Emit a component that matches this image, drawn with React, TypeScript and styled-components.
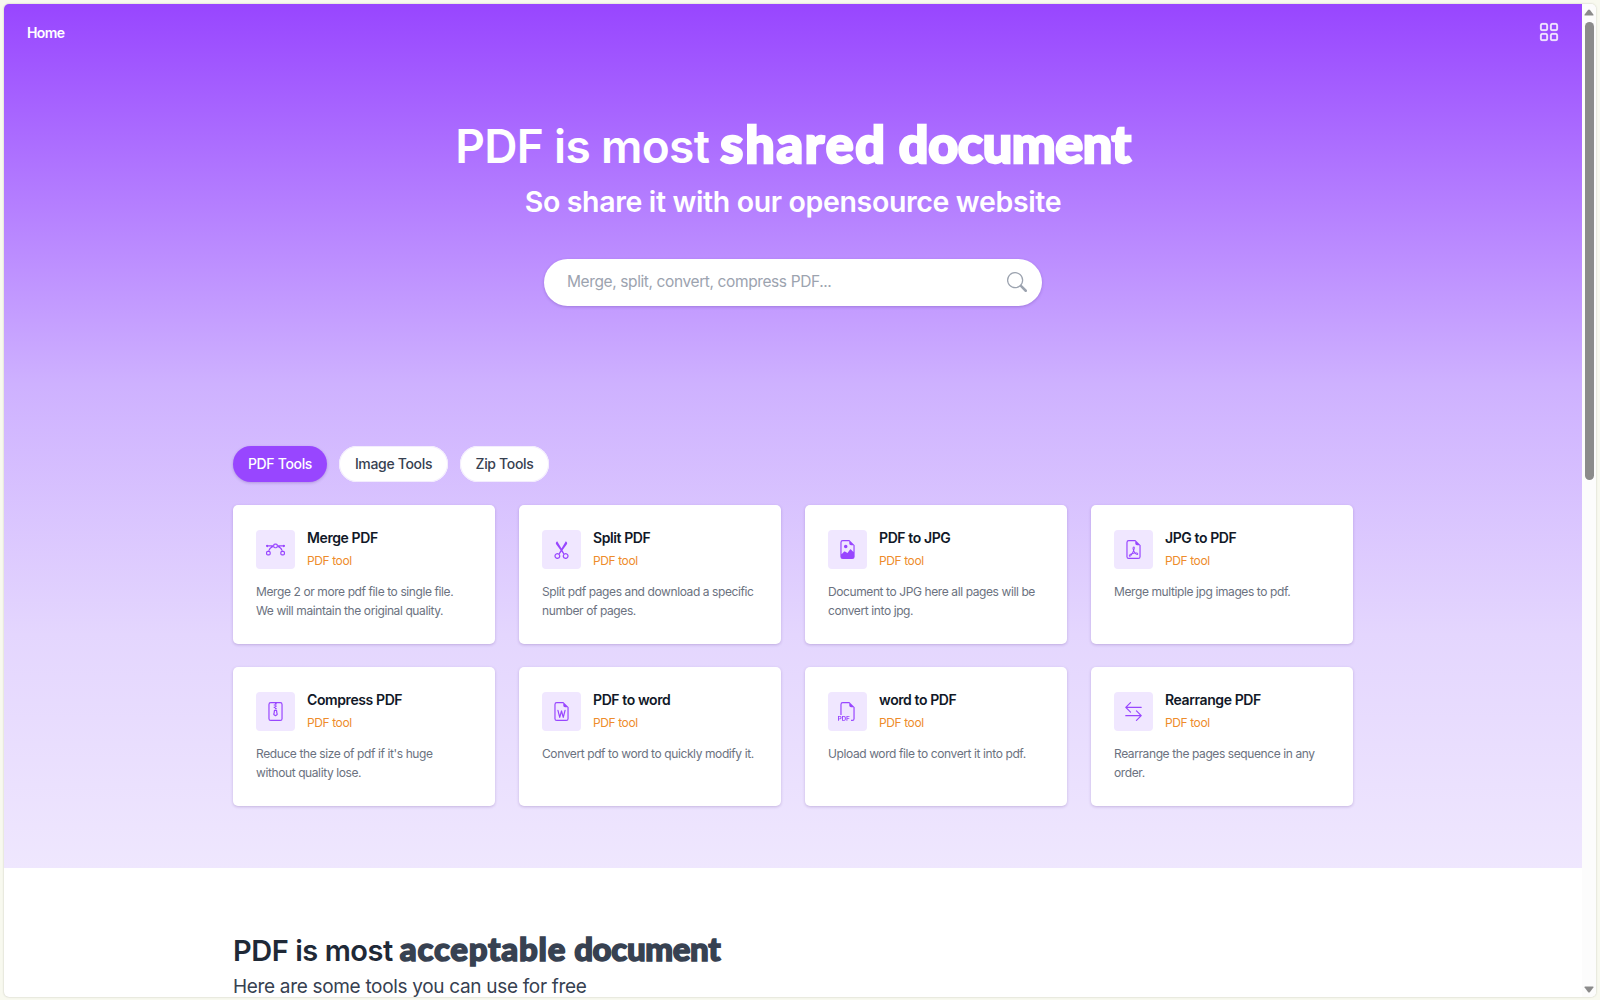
import React from "react";
import styled, { createGlobalStyle } from "styled-components";
import type { IconType } from "react-icons";
import {
  BsGrid, BsSearch, BsBezier, BsScissors, BsFileEarmarkImage, BsFileEarmarkPdf,
  BsFileZip, BsFileEarmarkWord, BsFiletypePdf, BsArrowLeftRight,
} from "react-icons/bs";

const Global = createGlobalStyle`
  *, *::before, *::after { box-sizing: border-box; }
  html, body { margin: 0; height: 100%; }
  body { background: #f8f9ef; overflow: hidden; font-family: Inter, "Liberation Sans", sans-serif; }
  h1, h2, h3, p { margin: 0; font-weight: inherit; }
  button { font: inherit; border: 0; cursor: pointer; }
`;

const Frame = styled.div`
  height: 1000px;
  padding: 4px 4px 3px;
`;

const Window = styled.div`
  display: flex;
  height: 993px;
  overflow: hidden;
  border-radius: 5px;
  background: #fff;
  box-shadow: 0 0 2px rgba(90, 90, 70, 0.35);
`;

const Page = styled.main`
  width: 1578px;
  overflow: hidden;
`;

const Hero = styled.section`
  height: 864px;
  background: linear-gradient(180deg, #9846ff 0%, #ceb1ff 44%, #e4d6fe 73%, #efe7fe 100%);
`;

const Nav = styled.nav`
  display: flex;
  justify-content: space-between;
  align-items: center;
  height: 56px;
  padding: 0 23px;
  color: #fff;
`;

const NavLink = styled.a`
  font-size: 14px;
  font-weight: 600;
  letter-spacing: -0.6px;
`;

const GridIcon = styled(BsGrid)`
  stroke: currentColor;
  stroke-width: 0.3px;
`;

const Headline = styled.header`
  display: flex;
  flex-direction: column;
  align-items: center;
  padding-top: 54px;
  color: #fff;
`;

const Title = styled.h1`
  display: flex;
  align-items: baseline;
  height: 58px;
  line-height: 58px;
  font-size: 46px;
  font-weight: 600;
  letter-spacing: -0.65px;
  white-space: nowrap;
`;

const Display = styled.span<{ $size: number; $spacing: number; $gap: number; $stroke: number; $color: string }>`
  margin-left: ${(p) => p.$gap}px;
  font-family: Lato, Inter, sans-serif;
  font-size: ${(p) => p.$size}px;
  font-weight: 900;
  letter-spacing: ${(p) => p.$spacing}px;
  color: ${(p) => p.$color};
  -webkit-text-stroke: ${(p) => p.$stroke}px ${(p) => p.$color};
`;

const Subtitle = styled.p`
  margin-top: 12px;
  line-height: 36px;
  font-size: 28.5px;
  font-weight: 600;
  letter-spacing: -0.36px;
`;

const Search = styled.div`
  display: flex;
  align-items: center;
  justify-content: space-between;
  width: 498px;
  height: 47px;
  margin-top: 39px;
  padding: 0 15px 2px 23px;
  border-radius: 24px;
  background: #fff;
  color: #9ca3af;
  font-size: 15.5px;
  letter-spacing: -0.39px;
  box-shadow: 0 1px 3px rgba(60, 20, 120, 0.25);
`;

const Container = styled.div`
  width: 1120px;
  margin: 0 auto;
`;

const Tabs = styled.div`
  display: flex;
  gap: 12px;
  margin: 140px 0 23px;
`;

const Tab = styled.button<{ $active?: boolean; $width: number }>`
  width: ${(p) => p.$width}px;
  height: 36px;
  padding: 0 0 2px;
  border-radius: 18px;
  font-size: 14px;
  font-weight: 500;
  letter-spacing: -0.33px;
  color: ${(p) => (p.$active ? "#fff" : "#374151")};
  background: ${(p) => (p.$active ? "#9846ff" : "#fff")};
  box-shadow: ${(p) => (p.$active ? "0 1px 3px rgba(60,20,120,.25)" : "inset 0 0 0 1px #f3edfd")};
`;

const Grid = styled.div`
  display: grid;
  grid-template-columns: repeat(4, 262px);
  grid-auto-rows: 139px;
  gap: 23.4px 24px;
`;

const Card = styled.article`
  padding: 25px 23px 0 23px;
  border-radius: 5px;
  background: #fff;
  box-shadow: 0 1px 3px rgba(60, 20, 120, 0.22);
`;

const CardHead = styled.div`
  display: flex;
  gap: 12px;
`;

const IconBox = styled.div`
  display: grid;
  place-items: center;
  width: 39px;
  height: 39px;
  border-radius: 4px;
  color: #9846ff;
  background: #f0e7ff;
`;

const CardTitle = styled.h3`
  margin-top: -1px;
  line-height: 18px;
  font-size: 14px;
  font-weight: 600;
  letter-spacing: -0.4px;
  color: #111827;
`;

const Tag = styled.p`
  margin-top: 6px;
  line-height: 16px;
  font-size: 12px;
  letter-spacing: -0.4px;
  color: #ee8c2b;
`;

const Desc = styled.p`
  margin-top: 13px;
  line-height: 19px;
  font-size: 12px;
  letter-spacing: -0.4px;
  color: #6b7280;
  white-space: pre;
`;

const Acceptable = styled.section`
  padding-top: 60px;
  color: #1f2937;
`;

const Subhead = styled.h2`
  display: flex;
  align-items: baseline;
  height: 40px;
  line-height: 40px;
  font-size: 29px;
  font-weight: 600;
  letter-spacing: -0.45px;
  white-space: nowrap;
`;

const Note = styled.p`
  margin-top: 7px;
  line-height: 24px;
  font-size: 19px;
  letter-spacing: -0.32px;
  color: #374151;
`;

const Track = styled.aside`
  display: flex;
  flex-direction: column;
  align-items: center;
  width: 14px;
  padding: 5px 0 4px;
  background: #fcfcfc;
`;

const Thumb = styled.div`
  width: 9px;
  height: 458px;
  margin: 6px 0 auto;
  border-radius: 5px;
  background: #8b8b8b;
`;

const Arrow = ({ down }: { down?: boolean }) => (
  <svg width="10" height="7" viewBox="0 0 10 7">
    <path d={down ? "M1 .5h8q1 .3.4 1.1L6 6q-1 1-2 0L.6 1.6Q0 .8 1 .5" : "M1 6.5h8q1-.3.4-1.1L6 1q-1-1-2 0L.6 5.4Q0 6.2 1 6.5"} fill="#8b8b8b" />
  </svg>
);

const tools: { icon: IconType; title: string; text: string }[] = [
  { icon: BsBezier, title: "Merge PDF", text: "Merge 2 or more pdf file to single file.\nWe will maintain the original quality." },
  { icon: BsScissors, title: "Split PDF", text: "Split pdf pages and download a specific\nnumber of pages." },
  { icon: BsFileEarmarkImage, title: "PDF to JPG", text: "Document to JPG here all pages will be\nconvert into jpg." },
  { icon: BsFileEarmarkPdf, title: "JPG to PDF", text: "Merge multiple jpg images to pdf." },
  { icon: BsFileZip, title: "Compress PDF", text: "Reduce the size of pdf if it's huge\nwithout quality lose." },
  { icon: BsFileEarmarkWord, title: "PDF to word", text: "Convert pdf to word to quickly modify it." },
  { icon: BsFiletypePdf, title: "word to PDF", text: "Upload word file to convert it into pdf." },
  { icon: BsArrowLeftRight, title: "Rearrange PDF", text: "Rearrange the pages sequence in any\norder." },
];

export default function App() {
  return (
    <Frame>
      <Global />
      <Window>
        <Page>
          <Hero>
            <Nav>
              <NavLink>Home</NavLink>
              <GridIcon size={20} />
            </Nav>
            <Headline>
              <Title>
                PDF is most
                <Display $size={52} $spacing={1.8} $gap={11} $stroke={2.4} $color="#fff">shared</Display>
                <Display $size={52} $spacing={-0.35} $gap={12} $stroke={2.4} $color="#fff">document</Display>
              </Title>
              <Subtitle>So share it with our opensource website</Subtitle>
              <Search>
                <span>Merge, split, convert, compress PDF...</span>
                <BsSearch size={20} />
              </Search>
            </Headline>
            <Container>
              <Tabs>
                <Tab $active $width={94}>PDF Tools</Tab>
                <Tab $width={109}>Image Tools</Tab>
                <Tab $width={89}>Zip Tools</Tab>
              </Tabs>
              <Grid>
                {tools.map(({ icon: Icon, title, text }) => (
                  <Card key={title}>
                    <CardHead>
                      <IconBox><Icon size={19} /></IconBox>
                      <div>
                        <CardTitle>{title}</CardTitle>
                        <Tag>PDF tool</Tag>
                      </div>
                    </CardHead>
                    <Desc>{text}</Desc>
                  </Card>
                ))}
              </Grid>
            </Container>
          </Hero>
          <Acceptable>
            <Container>
              <Subhead>
                PDF is most
                <Display $size={33} $spacing={0.75} $gap={7} $stroke={1.5} $color="#374151">acceptable</Display>
                <Display $size={33} $spacing={-0.35} $gap={8} $stroke={1.5} $color="#374151">document</Display>
              </Subhead>
              <Note>Here are some tools you can use for free</Note>
            </Container>
          </Acceptable>
        </Page>
        <Track>
          <Arrow />
          <Thumb />
          <Arrow down />
        </Track>
      </Window>
    </Frame>
  );
}
